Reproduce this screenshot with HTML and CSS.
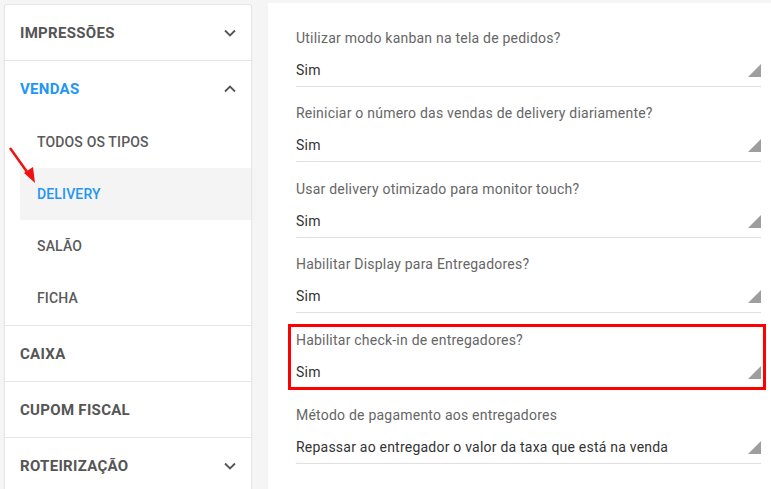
FILE: index.html
```html
<!DOCTYPE html>
<html lang="pt-BR">
<head>
    <meta charset="UTF-8">
    <meta name="viewport" content="width=device-width, initial-scale=1.0">
    <title>Configurações - Delivery</title>
    <link rel="stylesheet" href="styles.css">
</head>
<body>
    <div class="page">
        <nav class="sidebar">
            <div class="menu-group">
                <div class="menu-header">
                    <span>Impressões</span>
                    <svg class="chevron" width="12" height="8" viewBox="0 0 12 8"><path d="M1 1.5 6 6.5 11 1.5"/></svg>
                </div>
            </div>
            <div class="menu-group">
                <div class="menu-header active">
                    <span>Vendas</span>
                    <svg class="chevron" width="12" height="8" viewBox="0 0 12 8"><path d="M1 6.5 6 1.5 11 6.5"/></svg>
                </div>
                <ul class="submenu">
                    <li>Todos os tipos</li>
                    <li class="selected">Delivery</li>
                    <li>Salão</li>
                    <li>Ficha</li>
                </ul>
            </div>
            <div class="menu-group">
                <div class="menu-header"><span>Caixa</span></div>
            </div>
            <div class="menu-group">
                <div class="menu-header"><span>Cupom fiscal</span></div>
            </div>
            <div class="menu-group">
                <div class="menu-header">
                    <span>Roteirização</span>
                    <svg class="chevron" width="12" height="8" viewBox="0 0 12 8"><path d="M1 1.5 6 6.5 11 1.5"/></svg>
                </div>
            </div>
            <!-- seta de destaque -->
            <svg class="arrow" width="40" height="45" viewBox="0 0 40 45">
                <line x1="9" y1="7" x2="29" y2="35"/>
                <polygon points="34,42 23,32 32,26"/>
            </svg>
        </nav>

        <main class="content">
            <div class="field">
                <label>Utilizar modo kanban na tela de pedidos?</label>
                <div class="select"><span>Sim</span><i class="caret"></i></div>
            </div>
            <div class="field">
                <label>Reiniciar o número das vendas de delivery diariamente?</label>
                <div class="select"><span>Sim</span><i class="caret"></i></div>
            </div>
            <div class="field">
                <label>Usar delivery otimizado para monitor touch?</label>
                <div class="select"><span>Sim</span><i class="caret"></i></div>
            </div>
            <div class="field">
                <label>Habilitar Display para Entregadores?</label>
                <div class="select"><span>Sim</span><i class="caret"></i></div>
            </div>
            <div class="field highlight">
                <label>Habilitar check-in de entregadores?</label>
                <div class="select"><span>Sim</span><i class="caret"></i></div>
            </div>
            <div class="field">
                <label>Método de pagamento aos entregadores</label>
                <div class="select"><span>Repassar ao entregador o valor da taxa que está na venda</span><i class="caret"></i></div>
            </div>
        </main>
    </div>
</body>
</html>
```

FILE: styles.css
```css
* { box-sizing: border-box; }
body { margin: 0; font-family: Roboto, "Liberation Sans", Arial, sans-serif; background-color: #f5f5f5; overflow: hidden; }
.page { display: flex; align-items: flex-start; gap: 16px; padding: 3px 0 0 4px; height: 489px; }

.sidebar { position: relative; width: 248px; margin-top: 1px; background: #fff; border: 1px solid #e6e6e6; border-radius: 2px; box-shadow: 0 1px 2px rgba(0, 0, 0, 0.05); }
.menu-group { border-bottom: 1px solid #e6e6e6; }
.menu-header { display: flex; align-items: center; justify-content: space-between; height: 55px; padding: 0 15px 0 15px; font-size: 15px; font-weight: 700; letter-spacing: 0.3px; text-transform: uppercase; color: #555; }
.menu-header.active { color: #2196f3; }
.chevron { fill: none; stroke: #555; stroke-width: 1.8; }
.submenu { list-style: none; margin: 0 0 0 15px; padding: 0 0 1px; }
.submenu li { height: 52px; display: flex; align-items: center; padding-left: 17px; font-size: 14px; font-weight: 500; letter-spacing: 0.15px; text-transform: uppercase; color: #5a5a5a; }
.submenu li.selected { background-color: #f4f4f4; color: #2196f3; }
.arrow { position: absolute; left: -4px; top: 136px; }
.arrow line { stroke: #ee1111; stroke-width: 2.5; }
.arrow polygon { fill: #ee1111; }

.content { flex: 1; align-self: stretch; background: #fff; padding: 25px 10px 0 28px; }
.field { position: relative; margin-bottom: 16.4px; }
.field label { display: block; font-size: 14px; line-height: 20px; letter-spacing: 0.22px; color: #666; margin-bottom: 6px; }
.select { display: flex; align-items: center; justify-content: space-between; height: 33px; border-bottom: 1px solid #e0e0e0; font-size: 14px; letter-spacing: 0.22px; color: #333; }
.caret { width: 0; height: 0; margin-top: 1px; border-left: 13px solid transparent; border-bottom: 13px solid #9e9e9e; }
.field.highlight::after { content: ""; position: absolute; top: -6px; left: -8px; right: -5px; bottom: -1px; border: 3px solid #ff0000; }
```
